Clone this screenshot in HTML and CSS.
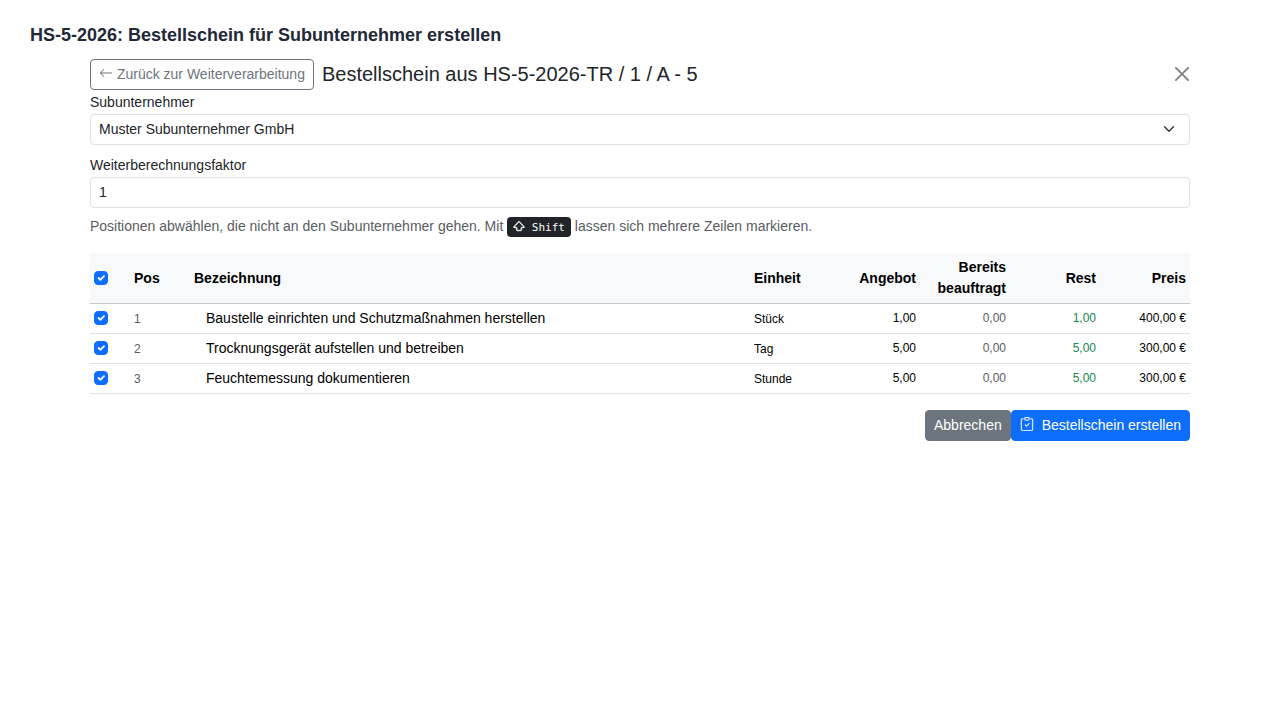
FILE: index.html
```html
<!DOCTYPE html>
<html lang="de">
<head>
<meta charset="utf-8">
<meta name="viewport" content="width=device-width, initial-scale=1">
<title>HS-5-2026: Bestellschein für Subunternehmer erstellen</title>
<link rel="stylesheet" href="styles.css">
</head>
<body>
<h1 class="page-title">HS-5-2026: Bestellschein für Subunternehmer erstellen</h1>
<main class="container">
  <header class="toolbar">
    <button type="button" class="btn btn-outline"><svg class="icon" viewBox="0 0 16 16" fill="currentColor" aria-hidden="true"><path fill-rule="evenodd" d="M15 8a.5.5 0 0 0-.5-.5H2.707l3.147-3.146a.5.5 0 1 0-.708-.708l-4 4a.5.5 0 0 0 0 .708l4 4a.5.5 0 0 0 .708-.708L2.707 8.5H14.5A.5.5 0 0 0 15 8"/></svg> Zurück zur Weiterverarbeitung</button>
    <h2 class="title">Bestellschein aus HS-5-2026-TR / 1 / A - 5</h2>
    <button type="button" class="close" aria-label="Schließen"><svg viewBox="0 0 16 16" fill="currentColor" aria-hidden="true"><path d="M.293.293a1 1 0 0 1 1.414 0L8 6.586 14.293.293a1 1 0 1 1 1.414 1.414L9.414 8l6.293 6.293a1 1 0 0 1-1.414 1.414L8 9.414l-6.293 6.293a1 1 0 0 1-1.414-1.414L6.586 8 .293 1.707a1 1 0 0 1 0-1.414z"/></svg></button>
  </header>
  <form>
    <div class="fields">
      <div class="field">
        <label for="sub">Subunternehmer</label>
        <select id="sub" class="control select"><option>Muster Subunternehmer GmbH</option></select>
      </div>
      <div class="field">
        <label for="faktor">Weiterberechnungsfaktor</label>
        <input id="faktor" class="control" type="text" inputmode="decimal" value="1">
      </div>
    </div>
    <p class="hint">Positionen abwählen, die nicht an den Subunternehmer gehen. Mit <kbd><svg class="icon" viewBox="0 0 16 16" fill="currentColor" stroke="currentColor" stroke-width=".6" aria-hidden="true"><path d="M7.27 2.047a1 1 0 0 1 1.46 0l6.345 6.77c.6.638.146 1.683-.73 1.683H11.5v3a1 1 0 0 1-1 1h-5a1 1 0 0 1-1-1v-3H1.654C.78 10.5.326 9.455.924 8.816zM14.346 9.5 8 2.731 1.654 9.5H4.5a1 1 0 0 1 1 1v3h5v-3a1 1 0 0 1 1-1z"/></svg> Shift</kbd> lassen sich mehrere Zeilen markieren.</p>
    <table class="table">
      <colgroup><col class="c-check"><col class="c-pos"><col><col class="c-unit"><col class="c-num"><col class="c-num"><col class="c-num"><col class="c-num"></colgroup>
      <thead>
        <tr><th><input type="checkbox" class="check" aria-label="Alle Positionen auswählen" checked></th><th>Pos</th><th>Bezeichnung</th><th>Einheit</th><th class="end">Angebot</th><th class="end">Bereits beauftragt</th><th class="end">Rest</th><th class="end">Preis</th></tr>
      </thead>
      <tbody>
        <tr><td><input type="checkbox" class="check" aria-label="Position 1" checked></td><td><span class="small muted">1</span></td><td class="name">Baustelle einrichten und Schutzmaßnahmen herstellen</td><td><span class="small">Stück</span></td><td class="num">1,00</td><td class="num muted">0,00</td><td class="num green">1,00</td><td class="num">400,00 €</td></tr>
        <tr><td><input type="checkbox" class="check" aria-label="Position 2" checked></td><td><span class="small muted">2</span></td><td class="name">Trocknungsgerät aufstellen und betreiben</td><td><span class="small">Tag</span></td><td class="num">5,00</td><td class="num muted">0,00</td><td class="num green">5,00</td><td class="num">300,00 €</td></tr>
        <tr><td><input type="checkbox" class="check" aria-label="Position 3" checked></td><td><span class="small muted">3</span></td><td class="name">Feuchtemessung dokumentieren</td><td><span class="small">Stunde</span></td><td class="num">5,00</td><td class="num muted">0,00</td><td class="num green">5,00</td><td class="num">300,00 €</td></tr>
      </tbody>
    </table>
    <div class="actions">
      <button type="button" class="btn btn-secondary">Abbrechen</button>
      <button type="submit" class="btn btn-primary"><svg class="icon icon-gap" viewBox="0 0 16 16" fill="currentColor" stroke="currentColor" stroke-width=".2" aria-hidden="true"><path fill-rule="evenodd" d="M10.854 7.146a.5.5 0 0 1 0 .708l-3 3a.5.5 0 0 1-.708 0l-1.5-1.5a.5.5 0 1 1 .708-.708L7.5 9.793l2.646-2.647a.5.5 0 0 1 .708 0"/><path d="M4 1.5H3a2 2 0 0 0-2 2V14a2 2 0 0 0 2 2h10a2 2 0 0 0 2-2V3.5a2 2 0 0 0-2-2h-1v1h1a1 1 0 0 1 1 1V14a1 1 0 0 1-1 1H3a1 1 0 0 1-1-1V3.5a1 1 0 0 1 1-1h1z"/><path d="M9.5 1a.5.5 0 0 1 .5.5v1a.5.5 0 0 1-.5.5h-3a.5.5 0 0 1-.5-.5v-1a.5.5 0 0 1 .5-.5zm-3-1A1.5 1.5 0 0 0 5 1.5v1A1.5 1.5 0 0 0 6.5 4h3A1.5 1.5 0 0 0 11 2.5v-1A1.5 1.5 0 0 0 9.5 0z"/></svg>Bestellschein erstellen</button>
    </div>
  </form>
</main>
</body>
</html>
```
FILE: styles.css
```css
*, *::before, *::after { box-sizing: border-box; }

body {
  margin: 0;
  padding: 24px 30px;
  background: #fff;
  color: #212529;
  font-family: "Liberation Sans", Arial, sans-serif;
  font-size: 14px;
  line-height: 21px;
}

button, input, select { font: inherit; color: inherit; margin: 0; }

.page-title {
  margin: 0 0 12px;
  color: #1f2937;
  font-size: 18px;
  font-weight: 700;
  line-height: 23px;
}

.container { max-width: 1100px; margin: 0 auto; }

.toolbar { display: flex; align-items: center; gap: 8px; }

.title { margin: 0; font-size: 20px; font-weight: 400; line-height: 23px; }

.btn {
  padding: 4px 8px;
  border: 1px solid transparent;
  border-radius: 4px;
  color: #fff;
  line-height: 21px;
  white-space: nowrap;
  cursor: pointer;
}
.btn-outline { background: transparent; border-color: #6c757d; color: #6c757d; }
.btn-secondary { background: #6c757d; border-color: #6c757d; }
.btn-primary { background: #0d6efd; border-color: #0d6efd; }

.icon { width: 1em; height: 1em; vertical-align: -1px; }
.icon-gap { margin-right: 8px; }

.close {
  display: flex;
  margin-left: auto;
  padding: 0 1px 2px;
  border: 0;
  background: transparent;
  color: #000;
  opacity: 0.5;
  cursor: pointer;
}
.close svg { width: 14px; height: 14px; }

.fields { display: grid; gap: 10px; padding-top: 2px; }
.field { display: grid; gap: 2px; }
.field label { line-height: 20px; }

.control {
  width: 100%;
  height: 31px;
  padding: 4px 8px;
  border: 1px solid #dee2e6;
  border-radius: 4px;
  background-color: #fff;
  line-height: 21px;
}
input.control { padding: 3px 8px 5px; }
.select {
  appearance: none;
  background-image: url("data:image/svg+xml,%3csvg xmlns='http://www.w3.org/2000/svg' viewBox='0 0 16 16'%3e%3cpath fill='none' stroke='%23343a40' stroke-linecap='round' stroke-linejoin='round' stroke-width='2' d='m2 5 6 6 6-6'/%3e%3c/svg%3e");
  background-repeat: no-repeat;
  background-position: right 14px top 8px;
  background-size: 12px 12px;
}

.hint { margin: 8px 0 16px; color: #595c5f; }

kbd {
  padding: 4px 6px 3px;
  border-radius: 4px;
  background: #212529;
  color: #fff;
  font-family: "DejaVu Sans Mono", monospace;
  font-size: 11px;
  line-height: 14px;
}
kbd .icon { width: 12px; height: 12px; }

.table {
  width: 100%;
  table-layout: fixed;
  border-collapse: separate;
  border-spacing: 0;
  color: #000;
}
.c-check { width: 40px; }
.c-pos { width: 60px; }
.c-unit { width: 80px; }
.c-num { width: 90px; }

.table th, .table td {
  padding: 4px;
  border-bottom: 1px solid #dee2e6;
  text-align: left;
  vertical-align: middle;
}
.table td { vertical-align: top; }
.table th { background: #f8f9fa; border-bottom-color: #c6c7c8; font-weight: 700; }
.table .name { padding-left: 16px; }
.table .end, .table .num { text-align: right; }
.table .num { font-size: 12px; line-height: 20px; font-variant-numeric: tabular-nums; }
.small { font-size: 12px; line-height: 14px; }
.table .muted { color: #595c5f; }
.table .green { color: #198754; }

.check {
  appearance: none;
  display: block;
  width: 14px;
  height: 14px;
  margin: 3px 0;
  border: 1px solid #dee2e6;
  border-radius: 4px;
  background: #fff;
}
.check:checked {
  border-color: #0d6efd;
  background-color: #0d6efd;
  background-image: url("data:image/svg+xml,%3csvg xmlns='http://www.w3.org/2000/svg' viewBox='0 0 20 20'%3e%3cpath fill='none' stroke='%23fff' stroke-linecap='round' stroke-linejoin='round' stroke-width='3' d='m6 10 3 3 6-6'/%3e%3c/svg%3e");
  background-position: center;
  background-repeat: no-repeat;
}

.actions { display: flex; justify-content: flex-end; margin-top: 16px; }
```
